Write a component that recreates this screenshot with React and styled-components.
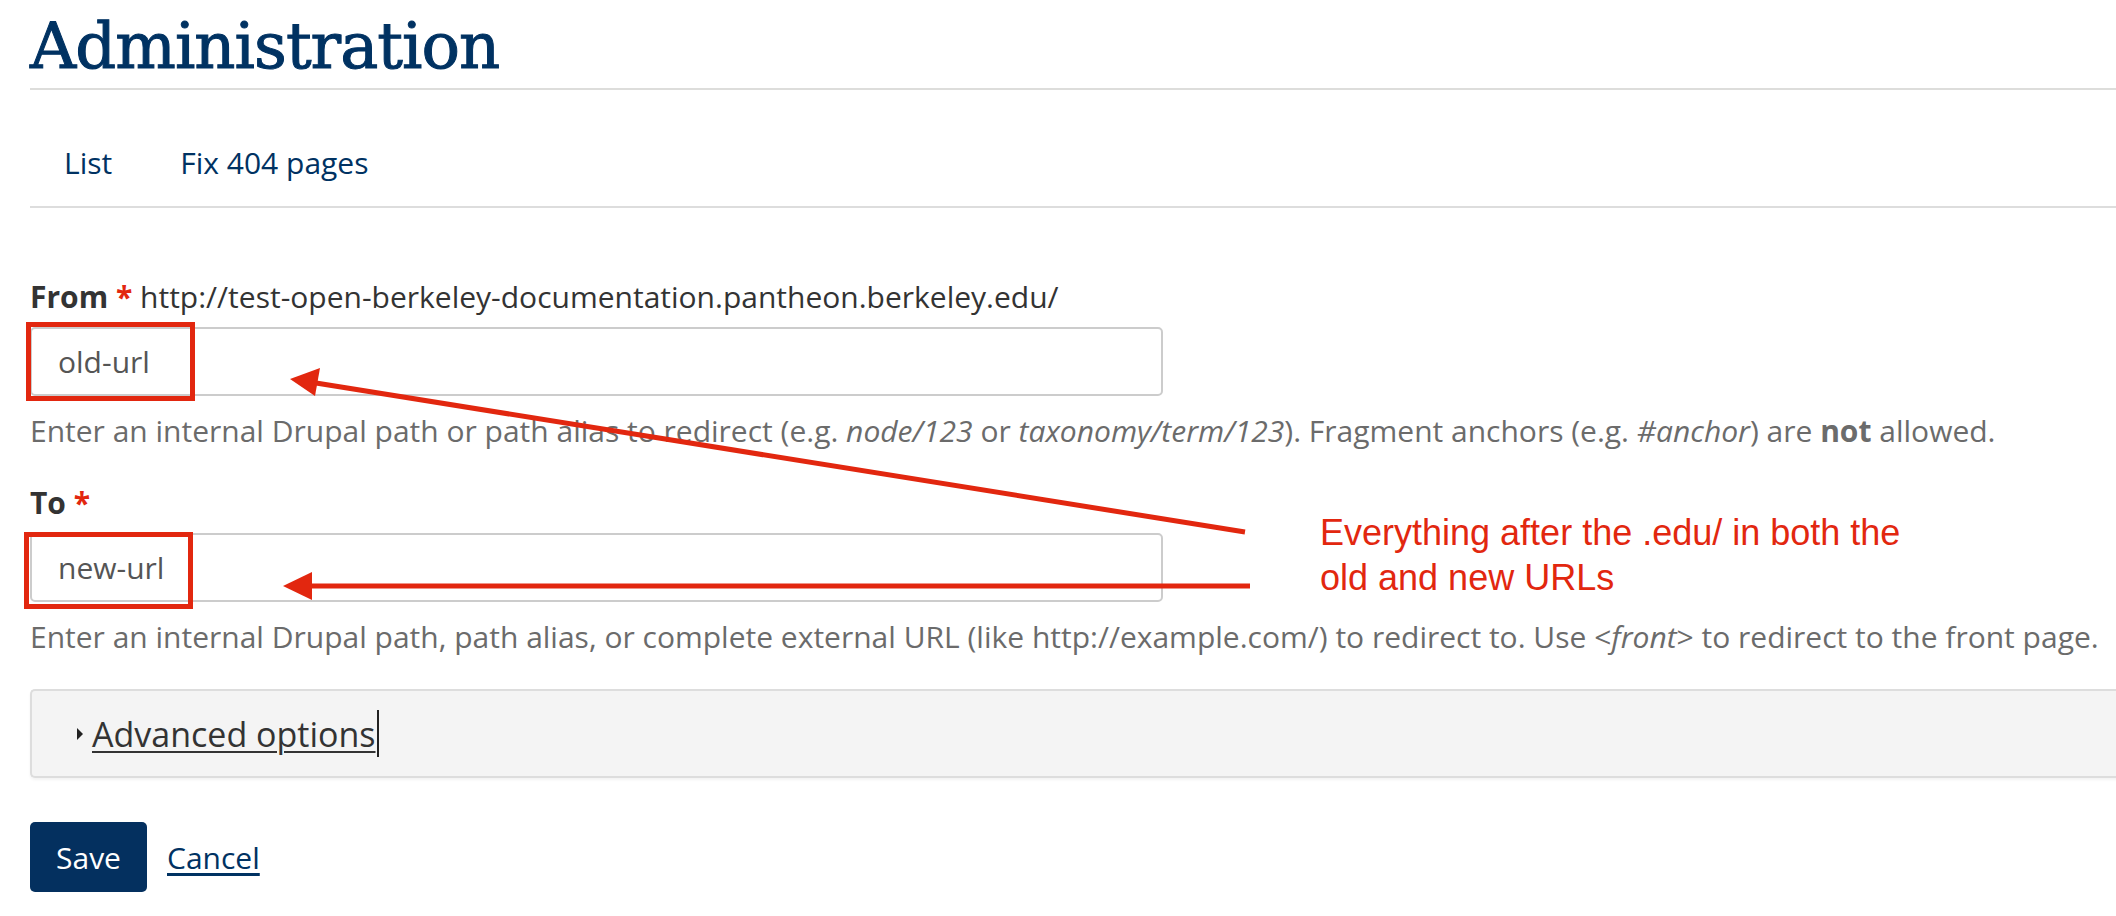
import styled, { createGlobalStyle } from "styled-components";

//? Globals ************************************************************************************************************************
const GlobalStyle = createGlobalStyle`
  html, body {
    margin: 0;
    padding: 0;
    background: #ffffff;
    overflow: hidden;
  }
  body {
    font-family: "Open Sans", "Liberation Sans", sans-serif;
    color: #333333;
  }
`;

const BLUE = "#003262";
const RED = "#e2270f";

const App = () => {
  return (
    <>
      <GlobalStyle />
      <Page>
        <Title>Administration</Title>

        <Tabs>
          <Tab>List</Tab>
          <Tab>Fix 404 pages</Tab>
        </Tabs>

        <Form>
          <Field>
            <Label>
              <strong>From</strong> <Required>*</Required>{" "}
              <Prefix>http://test-open-berkeley-documentation.pantheon.berkeley.edu/</Prefix>
            </Label>
            <TextInput>old-url</TextInput>
            <Help>
              Enter an internal Drupal path or path alias to redirect (e.g. <em>node/123</em> or{" "}
              <em>taxonomy/term/123</em>). Fragment anchors (e.g. <em>#anchor</em>) are <b>not</b> allowed.
            </Help>
          </Field>

          <Field $top={33}>
            <Label>
              <strong>To</strong> <Required>*</Required>
            </Label>
            <TextInput>new-url</TextInput>
            <Help>
              Enter an internal Drupal path, path alias, or complete external URL (like
              http://example.com/) to redirect to. Use &lt;<em>front</em>&gt; to redirect to the front page.
            </Help>
          </Field>

          <Advanced>
            <Toggle />
            <AdvancedLink>Advanced options</AdvancedLink>
            <Caret />
          </Advanced>

          <Actions>
            <SaveButton>Save</SaveButton>
            <CancelLink>Cancel</CancelLink>
          </Actions>
        </Form>

        {/* screenshot annotations laid over the form */}
        <Markup width="2116" height="916" viewBox="0 0 2116 916">
          <rect x="28.5" y="324.5" width="164" height="74" fill="none" stroke={RED} strokeWidth="5" />
          <rect x="26.5" y="534.5" width="164" height="72" fill="none" stroke={RED} strokeWidth="5" />
          <line x1="1245" y1="532" x2="316" y2="383" stroke={RED} strokeWidth="5" />
          <path d="M290 379 L320 368 L315 396 z" fill={RED} />
          <line x1="1250" y1="586" x2="308" y2="586" stroke={RED} strokeWidth="5" />
          <path d="M283 586 L312 572 L312 600 z" fill={RED} />
        </Markup>
        <Note>
          Everything after the .edu/ in both the
          <br />
          old and new URLs
        </Note>
      </Page>
    </>
  );
};

//? Styled Components ************************************************************************************************************************
const Page = styled.div`
  position: relative;
  width: 2116px;
  height: 916px;
  box-sizing: border-box;
  padding: 14px 0 0 30px;
  font-size: 30px;
`;

const Title = styled.h1`
  margin: 0;
  padding-bottom: 10px;
  font-family: "DejaVu Serif", "Liberation Serif", serif;
  font-size: 64px;
  font-weight: normal;
  line-height: 64px;
  letter-spacing: -1px;
  color: ${BLUE};
  -webkit-text-stroke: 1px ${BLUE};
  border-bottom: 2px solid #dddddb;
`;

const Tabs = styled.ul`
  display: flex;
  list-style: none;
  margin: 0;
  padding: 53px 0 24px 0;
  border-bottom: 2px solid #dddddd;
`;

const Tab = styled.li`
  padding: 0 34px;
  line-height: 39px;
  color: ${BLUE};
`;

const Form = styled.div`
  padding-top: 69px;
`;

const Field = styled.div`
  margin-top: ${(p) => p.$top || 0}px;
  width: 1133px;
`;

const Label = styled.div`
  line-height: 39px;
  color: #333333;
  white-space: nowrap;
  strong {
    font-weight: 700;
  }
`;

const Required = styled.span`
  color: ${RED};
  font-weight: 700;
`;

const Prefix = styled.span`
  color: #333333;
`;

const TextInput = styled.div`
  box-sizing: border-box;
  margin-top: 11px;
  height: 69px;
  padding: 0 26px;
  display: flex;
  align-items: center;
  border: 2px solid #cccccc;
  border-radius: 5px;
  color: #555555;
`;

const Help = styled.div`
  margin-top: 15px;
  line-height: 39px;
  color: #6b6b6b;
  white-space: nowrap;
  b {
    font-weight: 700;
  }
`;

const Advanced = styled.div`
  box-sizing: border-box;
  margin-top: 33px;
  width: calc(100% + 60px);
  height: 89px;
  display: flex;
  align-items: center;
  padding-left: 45px;
  background: #f4f4f4;
  border: 2px solid #dddddd;
  border-right: none;
  border-radius: 5px 0 0 5px;
  box-shadow: 0 2px 3px rgba(0, 0, 0, 0.05);
`;

const Toggle = styled.span`
  width: 0;
  height: 0;
  margin-right: 9px;
  border-left: 6px solid #222222;
  border-top: 6px solid transparent;
  border-bottom: 6px solid transparent;
`;

const AdvancedLink = styled.span`
  font-size: 34px;
  color: #333333;
  text-decoration: underline;
  text-underline-offset: 4px;
  text-decoration-thickness: 2px;
`;

const Caret = styled.span`
  width: 2px;
  height: 47px;
  margin-left: 1px;
  background: #222222;
`;

const Actions = styled.div`
  display: flex;
  align-items: center;
  gap: 20px;
  margin-top: 44px;
`;

const SaveButton = styled.button`
  box-sizing: border-box;
  width: 117px;
  height: 70px;
  border: none;
  border-radius: 5px;
  background: #04305f;
  color: #ffffff;
  font-family: "Open Sans", "Liberation Sans", sans-serif;
  font-size: 30px;
`;

const CancelLink = styled.a`
  color: ${BLUE};
  text-decoration: underline;
  text-underline-offset: 4px;
`;

const Markup = styled.svg`
  position: absolute;
  top: 0;
  left: 0;
  pointer-events: none;
`;

const Note = styled.div`
  position: absolute;
  top: 510px;
  left: 1320px;
  font-family: "Liberation Sans", Arial, sans-serif;
  font-size: 36px;
  line-height: 45px;
  color: ${RED};
  white-space: nowrap;
`;

export default App;
